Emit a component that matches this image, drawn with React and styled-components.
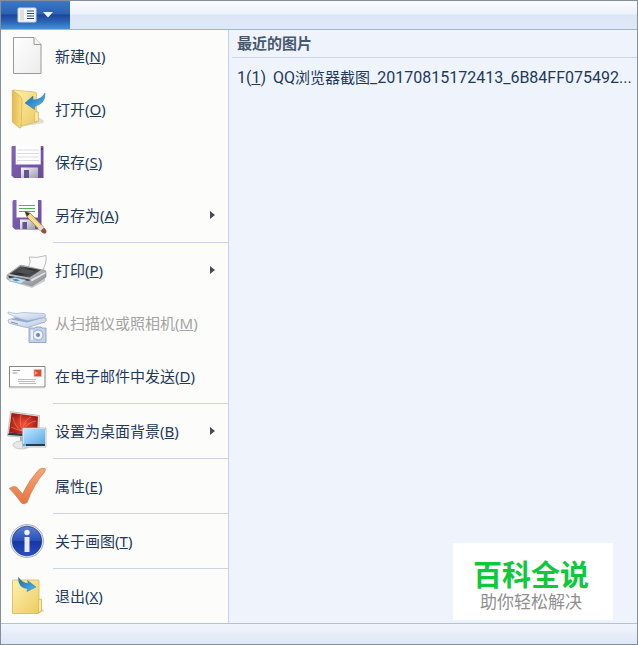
import React from 'react'
import styled, { createGlobalStyle, css } from 'styled-components'

const cText = '#1e395b';
const cDisabled = '#a3a3a3';
const cEdge = '#848e9d';
const cLine = '#ccd3e6';
const cPanel = '#eff4fc';

const GlobalStyle = createGlobalStyle`
    * {
        box-sizing: border-box;
    }

    body {
        margin: 0;
        background-color: ${cPanel};
    }

    body, button {
        font-family: "Noto Sans", "Noto Sans CJK SC", sans-serif;
        font-size: 15px;
        line-height: 20px;
        color: ${cText};
    }
`

const Window = styled.div`
    position: relative;
    display: flex;
    flex-direction: column;
    min-height: 100vh;
    border: 1px solid ${cEdge};
`;

const TitleBar = styled.header`
    display: flex;
    height: 29px;
    border-bottom: 1px solid #9db6d3;
    background: linear-gradient(#fafcff, #edf2fb 45%, #dce6f4 50%, #dfe8f6);
`;

const FileButton = styled.button`
    display: flex;
    align-items: center;
    gap: 6px;
    width: 69px;
    padding: 0 16px;
    border: 0;
    background: linear-gradient(#3c78c4, #2c62b2 45%, #1c459a 50%, #2b66b8 75%, #4292d8);
`;

const Body = styled.main`
    display: flex;
    flex: 1;
`;

const Menu = styled.nav`
    flex: 0 0 228px;
    background-color: #fcfdfb;
    border-right: 1px solid #c6d2e5;
`;

const MenuItem = styled.button`
    display: flex;
    align-items: center;
    gap: 8px;
    width: 100%;
    height: 53px;
    padding: 0 13px 0 6px;
    border: 0;
    background: none;
    text-align: left;

    &:disabled {
        color: ${cDisabled};
    }

    ${({ $open }) => $open && css`
        background-color: #e4eefb;
    `}
`;

const Label = styled.span`
    flex: 1;
    padding-bottom: 2px;
    white-space: nowrap;
`;

const Separator = styled.hr`
    height: 2px;
    margin: 0 0 0 52px;
    border: 0;
    border-top: 1px solid ${cLine};
`;

const Recent = styled.section`
    flex: 1;
    min-width: 0;
    margin-left: 1px;
    background-color: ${cPanel};
`;

const RecentTitle = styled.h2`
    margin: 0 0 0 2px;
    padding: 3px 5px 4px;
    border-bottom: 1px solid #ccd6e4;
    font-size: 15px;
    line-height: 20px;
    color: #47586e;
`;

const RecentItem = styled.a`
    display: flex;
    align-items: baseline;
    gap: 7px;
    padding: 9px 3px 9px 7px;
    white-space: nowrap;
    color: ${cText};
    text-decoration: none;
`;

const FileName = styled.span`
    flex: 1;
`;

const Wide = styled.span`
    font-family: Roboto, sans-serif;
    font-size: 16px;
`;

const Footer = styled.footer`
    height: 21px;
    border-top: 1px solid #b4c2d6;
    background: linear-gradient(#f1f5fd, #dfe7f5);
`;

const Stamp = styled.aside`
    position: absolute;
    right: 24px;
    bottom: 24px;
    width: 160px;
    height: 77px;
    padding: 12px 4px 0 0;
    background-color: #fff;
    text-align: center;
    font-family: "Noto Sans CJK SC", sans-serif;
`;

const StampName = styled.div`
    font-size: 29px;
    font-weight: 700;
    line-height: 36px;
    color: #0fc83c;
`;

const StampText = styled.div`
    font-size: 17px;
    line-height: 20px;
    color: #8f8f8f;
`;

const Icon = ({ children }) => (
    <svg width="40" height="41" viewBox="0 0 40 41" overflow="visible" aria-hidden="true">{children}</svg>
);

const Defs = styled.svg`
    position: absolute;
`;

const Gradients = () => (
    <Defs width="0" height="0" aria-hidden="true">
        <defs>
            <linearGradient id="paper" x2="1" y2="1"><stop stopColor="#fff" /><stop offset="1" stopColor="#ececec" /></linearGradient>
            <linearGradient id="folder" x2="1" y2="1"><stop stopColor="#fff0b0" /><stop offset="1" stopColor="#ebcb60" /></linearGradient>
            <linearGradient id="flap" x2="1"><stop stopColor="#e3b94c" /><stop offset="1" stopColor="#f9de87" /></linearGradient>
            <linearGradient id="arrow" x2="1" y2="1"><stop stopColor="#1767aa" /><stop offset="1" stopColor="#53bcf2" /></linearGradient>
            <linearGradient id="floppy" x2="1" y2="1"><stop stopColor="#8265b5" /><stop offset="1" stopColor="#69499c" /></linearGradient>
            <linearGradient id="metal" x2="1" y2="1"><stop stopColor="#f6f6fa" /><stop offset="1" stopColor="#9c9caa" /></linearGradient>
            <linearGradient id="dark" x2="1" y2="1"><stop stopColor="#777" /><stop offset=".5" stopColor="#2c2c2e" /><stop offset="1" stopColor="#777" /></linearGradient>
            <linearGradient id="body" x2="1" y2="1"><stop stopColor="#d5d7da" /><stop offset=".6" stopColor="#a9acb0" /><stop offset="1" stopColor="#85888d" /></linearGradient>
            <linearGradient id="scan" x2="1" y2="1"><stop stopColor="#f4f8ff" /><stop offset="1" stopColor="#b9c8e3" /></linearGradient>
            <linearGradient id="screen" x2="1" y2="1"><stop stopColor="#c4e7ff" /><stop offset="1" stopColor="#57a9e5" /></linearGradient>
            <linearGradient id="tick" x2="0" y2="1"><stop stopColor="#f6a777" /><stop offset="1" stopColor="#e37442" /></linearGradient>
            <radialGradient id="red"><stop stopColor="#f45336" /><stop offset="1" stopColor="#a51b14" /></radialGradient>
            <linearGradient id="info" x2="0" y2="1"><stop stopColor="#5c7ed2" /><stop offset=".48" stopColor="#2a50ba" /><stop offset=".52" stopColor="#1437a5" /><stop offset="1" stopColor="#284fc5" /></linearGradient>
        </defs>
    </Defs>
);

const NewIcon = () => (
    <Icon>
        <path d="M6.500 1.500H27L34 8.500V37.500H6.500Z" fill="url(#paper)" stroke="#999" />
        <path d="M27 1.500V8.500H34" fill="#f4f4f4" stroke="#999" />
    </Icon>
);

const OpenIcon = () => (
    <Icon>
        <path d="M14 38L36 34Q39 32 33 29L27 28Z" fill="#ddd" />
        <path d="M6 1L28 3Q29.500 3 29.500 5V23H31V32.500L14 37Z" fill="url(#folder)" stroke="#d8b959" strokeWidth=".7" />
        <path d="M27.500 24Q27.500 22 31.500 23V32L27.500 33Z" fill="#f9e9a8" stroke="#d0b04c" strokeWidth=".6" />
        <path d="M5.300 1L13 7Q15 9 15 12L14 38.500L12.500 39L5.300 33Z" fill="url(#flap)" stroke="#d5ae45" strokeWidth=".7" />
        <path d="M18 14L26 7V11Q34 11 38 4Q38.500 15 28 17L27.500 20.500Z" fill="url(#arrow)" stroke="#2877b0" strokeWidth=".5" />
    </Icon>
);

const SaveIcon = () => (
    <Icon>
        <path d="M5 4H35.500Q36.500 4 36.500 5V36H7L4.500 33.500V5Z" fill="url(#floppy)" />
        <path d="M8.700 4H33.700V22.500H8.700Z" fill="#fff" />
        <path d="M10 8H32M10 11.500H32M10 15H32M10 18.500H32" stroke="#d3cfdf" strokeWidth=".8" />
        <path d="M14 25.500H31V36H14Z" fill="url(#metal)" />
        <path d="M17 28H22V36H17Z" fill="#63538f" />
        <path d="M34.500 6h1v2h-1z" fill="#31214f" />
    </Icon>
);

const SaveAsIcon = () => (
    <Icon>
        <path d="M6.500 5H33.500Q34.500 5 34.500 6V34.500H8L5.500 32V6Z" fill="url(#floppy)" />
        <path d="M9.500 5H31V22.500H9.500Z" fill="#fff" />
        <path d="M12 10.500H28M12 13.500H28M12 16.500H28" stroke="#5bae5c" strokeWidth="1" />
        <path d="M13 24.500H28V34.500H13Z" fill="url(#metal)" />
        <path d="M15.500 27H20V34H15.500Z" fill="#63538f" />
        <path d="M18 16.500L23.500 18.500L36.500 32L33 35.500L20 22Z" fill="#f3d684" stroke="#8f6c34" strokeWidth=".7" />
        <path d="M18 16.500L23 18.500L20 21.500Z" fill="#3b3024" />
        <path d="M22 21L34.500 34" stroke="#fff0b3" />
        <path d="M34 30L31 33.500L34 36.500L37.500 33.500Z" fill="#ddd" />
        <path d="M37 32.500L33.500 36Q37 40 39 38Q40.500 36 37 32.500Z" fill="#99503b" />
    </Icon>
);

const PrintIcon = () => (
    <Icon>
        <path d="M2 31L25 38L38 31L38 27Z" fill="#ccc" />
        <path d="M20 18Q25 13 22 7Q30 8.500 39 5.500Q40 14 34.500 22Z" fill="#fafafa" stroke="#aaa" strokeWidth=".8" />
        <path d="M0 25L13 15.500Q14 15 16 15.500L38 20.500Q39.500 21 39 23V27L25 36L0 29Z" fill="url(#body)" stroke="#878b91" strokeWidth=".7" />
        <path d="M2.500 24L13.500 16L34 20L22.500 27.500Z" fill="url(#dark)" />
        <path d="M9 22L15 18.500L28 21L21 24.500Z" fill="#4d5055" />
        <path d="M1 25.500L22.500 29.500V31L2 28Z" fill="#3c3e43" />
        <path d="M24 29.500L38.500 22V23.500L24.500 31.500Z" fill="#e3e5e7" />
        <path d="M2 29L8 27.500L19 30L14 33.500L2 31Z" fill="#c6dff0" stroke="#8aa9bb" strokeWidth=".5" />
        <path d="M5 29.500L9 28.700L13 30.500L9 31.500Z" fill="#4a8fc0" />
    </Icon>
);

const ScannerIcon = () => (
    <Icon>
        <path d="M1 17L14 12.500L39 15Q40 18 38 19L21 24.500Q19 25 2 20Z" fill="url(#scan)" stroke="#8fa1c6" strokeWidth=".7" />
        <path d="M4 16.500L15 13L36 15L20 19.500Z" fill="#96a8cb" />
        <path d="M1 9Q9 12 16 9.500L37 10.500Q40 12 38 14L22 17.500Q17 18 1 10.500Z" fill="url(#scan)" stroke="#a1b1cf" strokeWidth=".7" />
        <path d="M4 19L11 21" stroke="#7a8fbb" />
        <path d="M22 25H28L29 24H34L35 25H39V39.500H22Z" fill="#c3d0ea" stroke="#8498c4" strokeWidth=".8" />
        <circle cx="31" cy="32" r="5" fill="#eef3ff" stroke="#9aabd0" />
        <circle cx="31" cy="32" r="2" fill="#7187b8" />
        <path d="M24 27H26V37H24Z" fill="#eaf0fd" />
    </Icon>
);

const MailIcon = () => (
    <Icon>
        <path d="M2.500 10.500H38V31H2.500Z" fill="#fdfdfd" stroke="#858585" />
        <path d="M2 31.800H38" stroke="#ccc" />
        <path d="M5.500 14.500H13M5.500 17H10.500" stroke="#888" strokeWidth=".8" />
        <path d="M11 23.500H29M11 25.500H28M12 27.500H29" stroke="#aaa" strokeWidth=".8" />
        <path d="M27 13.500H34.500V20.500H27Z" fill="#dc4b31" stroke="#efb2a6" strokeWidth=".8" />
        <path d="M28 19V15L31 17Z" fill="#f6926d" />
    </Icon>
);

const DesktopIcon = () => (
    <Icon>
        <path d="M13 24L20 25L21 34H13Z" fill="#aeb3ba" />
        <ellipse cx="14.500" cy="34" rx="8.500" ry="4" fill="#e5e7e9" stroke="#b8bcc0" strokeWidth=".7" />
        <path d="M3.500 .700L32.500 4.500L31.500 27L.500 25Z" fill="#e6e6e6" stroke="#aaa" strokeWidth=".7" />
        <path d="M4.500 2L31 5.500L30 24L2 21.500Z" fill="url(#red)" />
        <path d="M15 20Q7 15 6 6M15 20Q12 9 14 4M15 20Q18 8 24 6M15 20Q21 11 29 10M15 20Q22 16 29 17M15 20Q8 18 4 16" fill="none" stroke="#ff8a62" strokeWidth=".8" opacity=".7" />
        <path d="M2 21.500L30 24V26L1 24Z" fill="#30343b" />
        <path d="M15.500 17H39V36H15.500Z" fill="#eef5fa" stroke="#9eabb5" strokeWidth=".7" />
        <path d="M16.500 18H38V33H16.500Z" fill="url(#screen)" />
        <path d="M16.500 33H38V35H16.500Z" fill="#28394b" />
        <path d="M17 33H19V35H17Z" fill="#5bb5e8" />
    </Icon>
);

const TickIcon = () => (
    <Icon>
        <path d="M2.300 22.500Q6 19.500 9.500 21L15.500 28Q22 14 32 3.500Q35 1.500 38 2.500Q39 3 37.500 6Q27 18 20 36.500Q17 39 14.500 37Q8 28 2.300 22.500Z" fill="url(#tick)" stroke="#d97a4c" strokeWidth=".7" />
    </Icon>
);

const InfoIcon = () => (
    <Icon>
        <circle cx="20" cy="20" r="16.500" fill="#e2e6ec" stroke="#9ba4b2" strokeWidth=".8" />
        <circle cx="20" cy="20" r="14.800" fill="url(#info)" stroke="#243c86" strokeWidth=".7" />
        <circle cx="20" cy="11.500" r="2.700" fill="#f4f4f4" />
        <path d="M17.500 16H22.500V31H17.500Z" fill="#e9ebef" />
    </Icon>
);

const ExitIcon = () => (
    <Icon>
        <path d="M10 38L36 36Q39 34 33 32Z" fill="#ddd" />
        <path d="M5.500 5Q5.500 4 6.500 4H31Q32 4 32 5V24H34.500V35L31 37.500H5.500Z" fill="url(#folder)" stroke="#d8b64d" strokeWidth=".8" />
        <path d="M31.500 37V25Q31.500 22.500 34.500 23V34.500Z" fill="#fae9a5" stroke="#cdac49" strokeWidth=".6" />
        <path d="M11.500 1.500Q15 7 21.500 7.500L20.500 4.500L29 11L20 15.500L20.500 12.500Q11 12 11.500 1.500Z" fill="url(#arrow)" stroke="#2877b0" strokeWidth=".5" />
    </Icon>
);

const FileIcon = () => (
    <svg width="20" height="16" viewBox="0 0 20 16" aria-hidden="true">
        <rect x="1" y="1" width="18" height="14" rx="1" fill="#f5f8fc" stroke="#c8d8eb" />
        <path d="M3 2.500H7V13.500H3Z" fill="#dedede" />
        <path d="M10 4H17M10 6.500H17M10 9H17M10 11.500H17" stroke="#29457f" />
    </svg>
);

const DownIcon = () => (
    <svg width="10" height="6" viewBox="0 0 10 6" aria-hidden="true"><path d="M0 0H10L5 5.500Z" fill="#f2f7ff" /></svg>
);

const RightIcon = () => (
    <svg width="5" height="9" viewBox="0 0 5 9" aria-hidden="true"><path d="M0 0L5 4L0 8Z" fill="#454b58" /></svg>
);

const groups = [
    [
        { text: '新建', hotkey: 'N', icon: NewIcon },
        { text: '打开', hotkey: 'O', icon: OpenIcon },
        { text: '保存', hotkey: 'S', icon: SaveIcon },
        { text: '另存为', hotkey: 'A', icon: SaveAsIcon, sub: true },
    ],
    [
        { text: '打印', hotkey: 'P', icon: PrintIcon, sub: true },
        { text: '从扫描仪或照相机', hotkey: 'M', icon: ScannerIcon, disabled: true },
        { text: '在电子邮件中发送', hotkey: 'D', icon: MailIcon },
    ],
    [{ text: '设置为桌面背景', hotkey: 'B', icon: DesktopIcon, sub: true }],
    [{ text: '属性', hotkey: 'E', icon: TickIcon }],
    [{ text: '关于画图', hotkey: 'T', icon: InfoIcon }],
    [{ text: '退出', hotkey: 'X', icon: ExitIcon }],
];

export default function App() {
    return (
        <Window>
            <GlobalStyle />
            <Gradients />
            <TitleBar>
                <FileButton aria-label="菜单"><FileIcon /><DownIcon /></FileButton>
            </TitleBar>
            <Body>
                <Menu>
                    {groups.map((items, i) => (
                        <React.Fragment key={i}>
                            {i > 0 && <Separator />}
                            {items.map(({ text, hotkey, icon: ItemIcon, sub, disabled }) => (
                                <MenuItem key={hotkey} disabled={disabled}>
                                    <ItemIcon />
                                    <Label>{text}(<u>{hotkey}</u>)</Label>
                                    {sub && <RightIcon />}
                                </MenuItem>
                            ))}
                        </React.Fragment>
                    ))}
                </Menu>
                <Recent>
                    <RecentTitle>最近的图片</RecentTitle>
                    <RecentItem href="#recent-1">
                        <Wide>1(<u>1</u>)</Wide>
                        <FileName><Wide>QQ</Wide>浏览器截图<Wide>_20170815172413_6B84FF075492...</Wide></FileName>
                    </RecentItem>
                </Recent>
            </Body>
            <Footer />
            <Stamp>
                <StampName>百科全说</StampName>
                <StampText>助你轻松解决</StampText>
            </Stamp>
        </Window>
    )
}
